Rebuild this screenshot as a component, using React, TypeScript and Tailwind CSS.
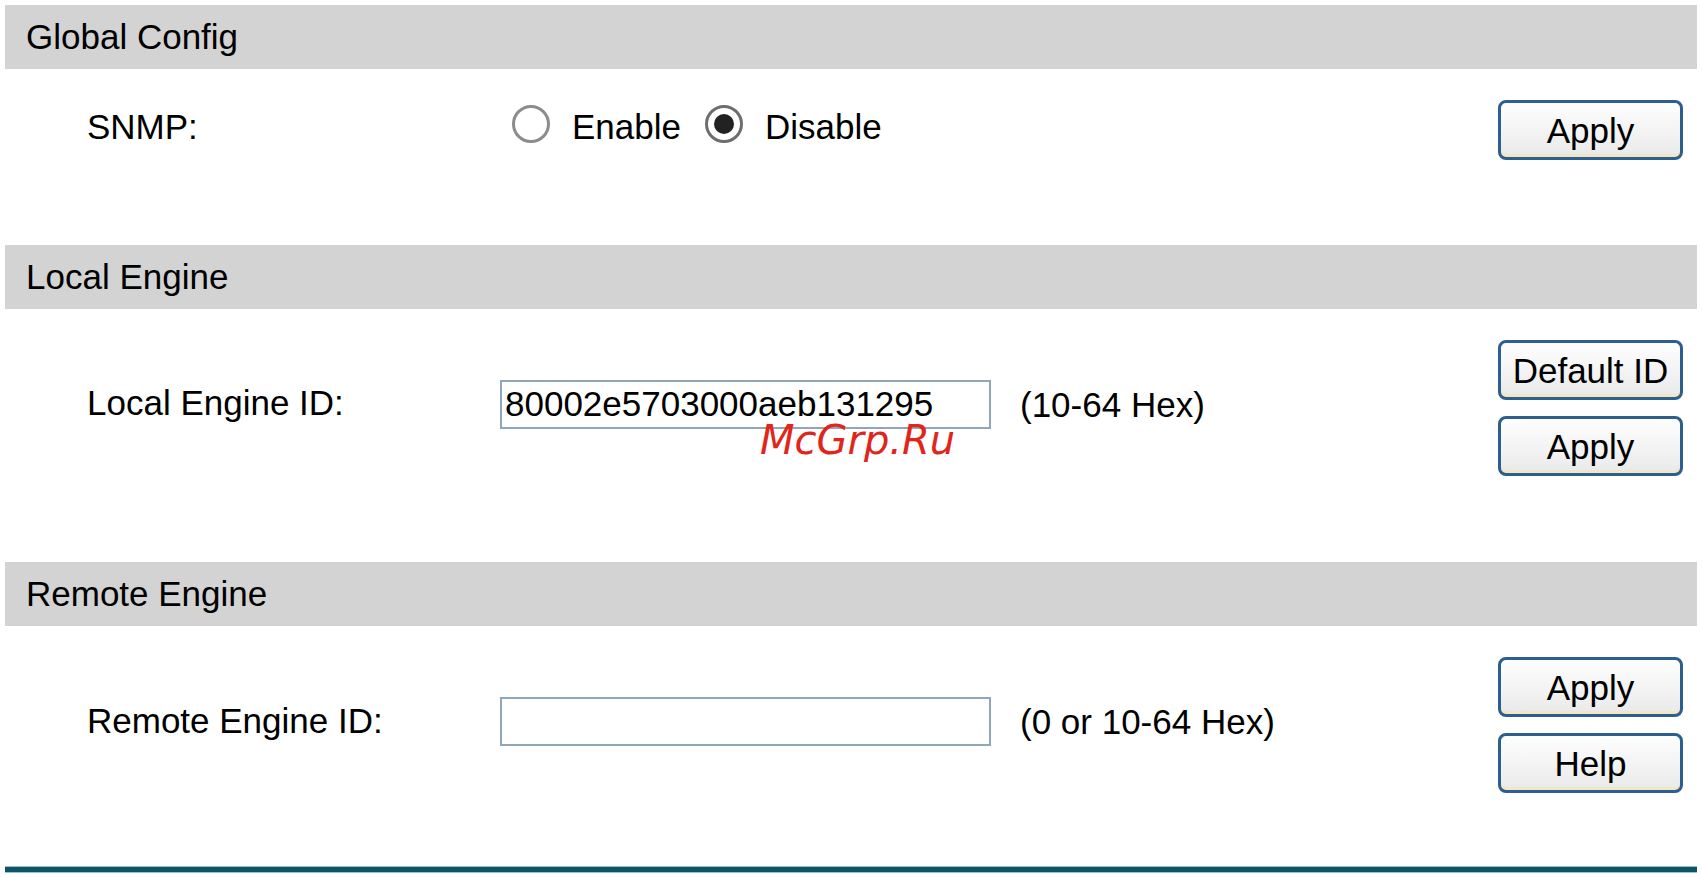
import React from "react";

function Header({ title }: { title: string }) {
  return (
    <div className="h-[64px] bg-[#d3d3d3] flex items-center pl-[21px] text-[35px] text-black leading-[40px]">
      {title}
    </div>
  );
}

function Btn({ children }: { children: React.ReactNode }) {
  return (
    <div className="w-[185px] h-[60px] rounded-[8px] border-[3px] border-[#2d5e90] bg-gradient-to-b from-[#fefefe] via-[#f4f4f4] to-[#e9e9e9] text-[35px] text-black leading-none flex items-center justify-center shadow-[inset_0_-3px_0_#f1e6c8]">
      {children}
    </div>
  );
}

function Radio({ checked }: { checked?: boolean }) {
  return (
    <div
      className={
        "w-[38px] h-[38px] mb-[6px] rounded-full bg-white flex items-center justify-center shrink-0 " +
        (checked ? "border-[3px] border-[#6e6e6e]" : "border-[3px] border-[#8c8c8c]")
      }
    >
      {checked ? <div className="w-[20px] h-[20px] rounded-full bg-[#222222]" /> : null}
    </div>
  );
}

export default function App() {
  return (
    <div className="relative w-[1702px] h-[877px] overflow-hidden bg-white pt-[5px] px-[5px] font-['Liberation_Sans',Arial,sans-serif] text-black">
      {/* Global Config */}
      <Header title="Global Config" />
      <div className="h-[176px] flex items-start">
        <div className="w-[495px] pl-[82px] pt-[38px] text-[35px] leading-[40px]">SNMP:</div>
        <div className="flex-1 pl-[12px] pt-[38px]">
          <div className="h-[40px] flex items-center text-[35px] leading-[40px]">
            <Radio />
            <span className="ml-[22px]">Enable</span>
            <span className="ml-[24px] flex items-center">
              <Radio checked />
            </span>
            <span className="ml-[22px]">Disable</span>
          </div>
        </div>
        <div className="w-[185px] mr-[14px] pt-[31px]">
          <Btn>Apply</Btn>
        </div>
      </div>

      {/* Local Engine */}
      <Header title="Local Engine" />
      <div className="h-[253px] flex items-start">
        <div className="w-[495px] pl-[82px] pt-[74px] text-[35px] leading-[40px]">Local Engine ID:</div>
        <div className="flex-1 pt-[71px]">
          <div className="flex items-center">
            <input
              readOnly
              value="80002e5703000aeb131295"
              className="w-[491px] h-[49px] border-2 border-[#8fa6bd] px-[3px] text-[35px] text-black bg-white outline-none font-['Liberation_Sans',Arial,sans-serif]"
            />
            <span className="ml-[29px] text-[35px] leading-[40px]">(10-64 Hex)</span>
          </div>
        </div>
        <div className="w-[185px] mr-[14px] pt-[31px] flex flex-col gap-[16px]">
          <Btn>Default ID</Btn>
          <Btn>Apply</Btn>
        </div>
      </div>

      {/* Remote Engine */}
      <Header title="Remote Engine" />
      <div className="h-[240px] flex items-start">
        <div className="w-[495px] pl-[82px] pt-[75px] text-[35px] leading-[40px]">Remote Engine ID:</div>
        <div className="flex-1 pt-[71px]">
          <div className="flex items-center">
            <input
              readOnly
              value=""
              className="w-[491px] h-[49px] border-2 border-[#8fa6bd] px-[3px] text-[35px] text-black bg-white outline-none font-['Liberation_Sans',Arial,sans-serif]"
            />
            <span className="ml-[29px] text-[35px] leading-[40px]">(0 or 10-64 Hex)</span>
          </div>
        </div>
        <div className="w-[185px] mr-[14px] pt-[31px] flex flex-col gap-[16px]">
          <Btn>Apply</Btn>
          <Btn>Help</Btn>
        </div>
      </div>

      {/* bottom rule */}
      <div className="h-[7px] bg-[#0c5566] border-y border-[#9cc3c9]" />

      {/* watermark */}
      <div className="absolute left-[760px] top-[420px] text-[40px] leading-none italic text-[#e1251b] font-['DejaVu_Sans',sans-serif]">
        McGrp.Ru
      </div>
    </div>
  );
}
